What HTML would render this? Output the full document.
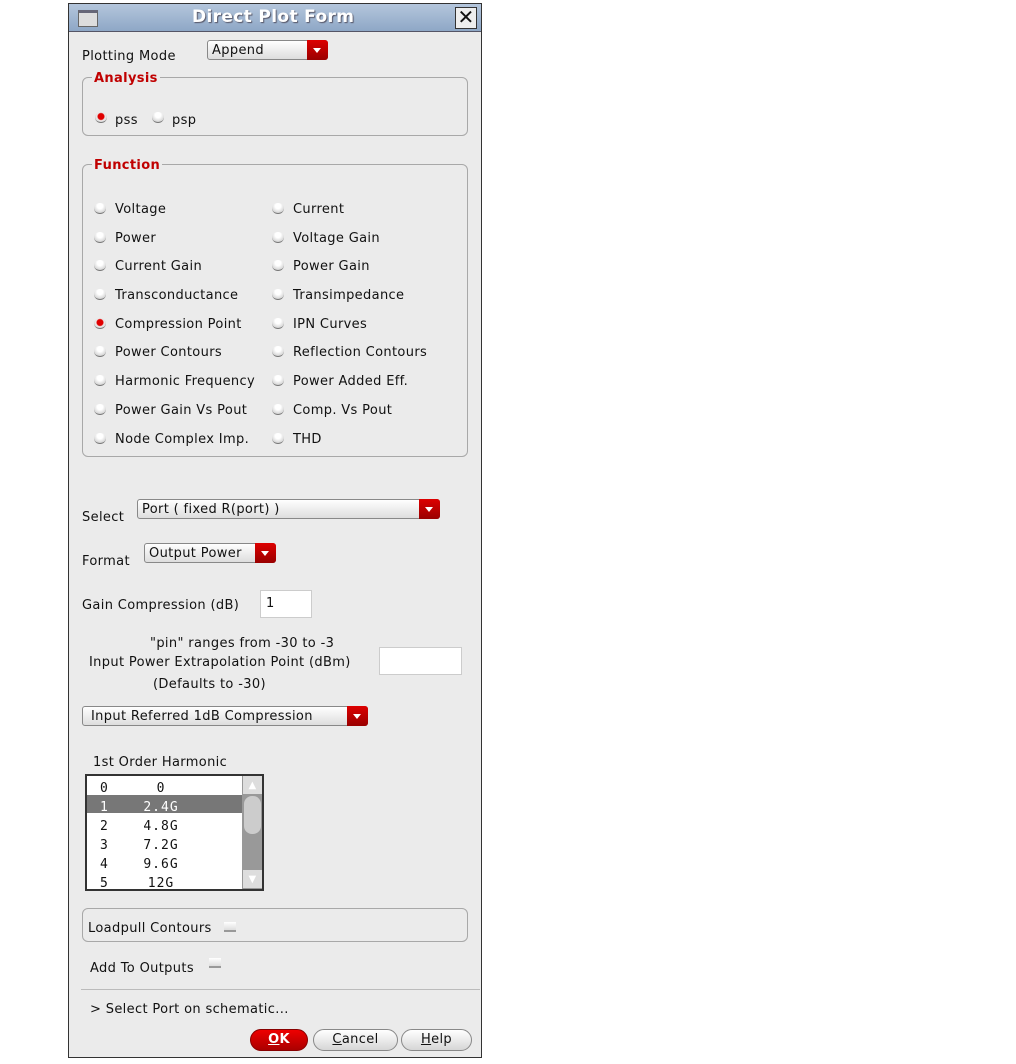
<!DOCTYPE html><html><head><style>
body{margin:0;width:1016px;height:1064px;background:#fff;position:relative;font-family:"DejaVu Sans","Liberation Sans",sans-serif;font-size:13px;line-height:19px;letter-spacing:0.35px;color:#111;overflow:hidden}
.a{position:absolute;white-space:nowrap}
#win{position:absolute;left:68px;top:3px;width:414px;height:1055px;border:1px solid #333;background:#ebebeb;box-sizing:border-box}
#title{position:absolute;left:69px;top:4px;width:412px;height:27px;background:linear-gradient(#b4c6dc,#8ea7c6);border-bottom:1px solid #556}
.grp{position:absolute;border:1px solid #a8a8a8;border-radius:6px}
.leg{position:absolute;background:#ebebeb;color:#c00000;font-weight:bold;padding:0 2px;line-height:15px}
.r{position:absolute;width:12px;height:11px;border-radius:50%;background:radial-gradient(circle at 50% 30%,#fff 30%,#bbb);border-bottom:1px solid #777;box-sizing:border-box}
.r.on{background:radial-gradient(circle at 50% 45%,#e00000 0 3px,#eee 4px,#bbb)}
.dd{position:absolute;height:20px;border:1px solid #888;border-radius:3px;background:linear-gradient(#fff,#ddd);box-sizing:border-box;padding:0 4px;line-height:19px}
.dd b{position:absolute;right:-1px;top:-1px;width:21px;height:20px;background:linear-gradient(#d00,#900);border-radius:0 3px 3px 0}
.dd b:after{content:"";position:absolute;left:6px;top:8px;border:4px solid transparent;border-top:5px solid #fff;border-bottom:0}
.in{position:absolute;background:#fff;border:1px solid #ccc;box-sizing:border-box}
.cb{position:absolute;width:12px;height:10px;border-bottom:2px solid #999;background:linear-gradient(#fff,#ddd);box-sizing:border-box}
.btn{position:absolute;height:22px;border:1px solid #888;border-radius:11px;background:linear-gradient(#fff,#d6d6d6);box-sizing:border-box;text-align:center;line-height:20px}
.mono{font-family:"DejaVu Sans Mono","Liberation Mono",monospace;font-size:13px;letter-spacing:1px}
</style></head><body>
<div id="win"></div>
<div id="title"></div>
<div class="a" style="left:78px;top:10px;width:18px;height:13px;background:#ddd;border:1px solid #666;border-top:3px solid #667"></div>
<div class="a" style="left:192px;top:6px;font-size:17px;font-weight:bold;color:#fff;text-shadow:1px 1px 1px #556;line-height:22px">Direct Plot Form</div>
<div class="a" style="left:455px;top:7px;width:20px;height:20px;border:1px solid #333;background:#eee;font-size:20px;line-height:19px;text-align:center">✕</div>

<div class="a" style="left:82px;top:47px">Plotting Mode</div>
<div class="dd" style="left:207px;top:40px;width:121px">Append<b></b></div>

<div class="grp" style="left:82px;top:77px;width:384px;height:57px"></div>
<div class="leg a" style="left:92px;top:71px">Analysis</div>
<div class="r on" style="left:95px;top:112px"></div><div class="a" style="left:115px;top:111px">pss</div>
<div class="r" style="left:152px;top:112px"></div><div class="a" style="left:172px;top:111px">psp</div>

<div class="grp" style="left:82px;top:164px;width:384px;height:291px"></div>
<div class="leg a" style="left:92px;top:158px">Function</div>
<div class="r" style="left:94px;top:203px"></div><div class="a" style="left:115px;top:200px">Voltage</div>
<div class="r" style="left:272px;top:203px"></div><div class="a" style="left:293px;top:200px">Current</div>
<div class="r" style="left:94px;top:232px"></div><div class="a" style="left:115px;top:229px">Power</div>
<div class="r" style="left:272px;top:232px"></div><div class="a" style="left:293px;top:229px">Voltage Gain</div>
<div class="r" style="left:94px;top:260px"></div><div class="a" style="left:115px;top:257px">Current Gain</div>
<div class="r" style="left:272px;top:260px"></div><div class="a" style="left:293px;top:257px">Power Gain</div>
<div class="r" style="left:94px;top:289px"></div><div class="a" style="left:115px;top:286px">Transconductance</div>
<div class="r" style="left:272px;top:289px"></div><div class="a" style="left:293px;top:286px">Transimpedance</div>
<div class="r on" style="left:94px;top:318px"></div><div class="a" style="left:115px;top:315px">Compression Point</div>
<div class="r" style="left:272px;top:318px"></div><div class="a" style="left:293px;top:315px">IPN Curves</div>
<div class="r" style="left:94px;top:346px"></div><div class="a" style="left:115px;top:343px">Power Contours</div>
<div class="r" style="left:272px;top:346px"></div><div class="a" style="left:293px;top:343px">Reflection Contours</div>
<div class="r" style="left:94px;top:375px"></div><div class="a" style="left:115px;top:372px">Harmonic Frequency</div>
<div class="r" style="left:272px;top:375px"></div><div class="a" style="left:293px;top:372px">Power Added Eff.</div>
<div class="r" style="left:94px;top:404px"></div><div class="a" style="left:115px;top:401px">Power Gain Vs Pout</div>
<div class="r" style="left:272px;top:404px"></div><div class="a" style="left:293px;top:401px">Comp. Vs Pout</div>
<div class="r" style="left:94px;top:433px"></div><div class="a" style="left:115px;top:430px">Node Complex Imp.</div>
<div class="r" style="left:272px;top:433px"></div><div class="a" style="left:293px;top:430px">THD</div>

<div class="a" style="left:82px;top:508px">Select</div>
<div class="dd" style="left:137px;top:499px;width:303px">Port ( fixed R(port) )<b></b></div>
<div class="a" style="left:82px;top:552px">Format</div>
<div class="dd" style="left:144px;top:543px;width:132px">Output Power<b></b></div>
<div class="a" style="left:82px;top:596px">Gain Compression (dB)</div>
<div class="in" style="left:260px;top:590px;width:52px;height:28px;padding:3px 5px">1</div>
<div class="a" style="left:150px;top:634px">"pin" ranges from -30 to -3</div>
<div class="a" style="left:89px;top:653px">Input Power Extrapolation Point (dBm)</div>
<div class="a" style="left:153px;top:675px">(Defaults to -30)</div>
<div class="in" style="left:379px;top:647px;width:83px;height:28px"></div>
<div class="dd" style="left:82px;top:706px;width:286px;padding-left:8px">Input Referred 1dB Compression<b></b></div>

<div class="a" style="left:93px;top:753px">1st Order Harmonic</div>
<div class="a" style="left:85px;top:774px;width:179px;height:117px;border:2px solid #333;background:#fff;box-sizing:border-box"></div>
<div class="a" style="left:87px;top:795px;width:155px;height:18px;background:#777"></div>
<div class="a" style="left:242px;top:776px;width:20px;height:113px;background:#999"></div>
<div class="a" style="left:244px;top:796px;width:17px;height:38px;background:#ccc;border-radius:8px"></div>
<div class="a" style="left:243px;top:776px;width:19px;height:18px;background:#ddd;color:#fff;font-size:10px;text-align:center">▲</div>
<div class="a" style="left:243px;top:870px;width:19px;height:18px;background:#ddd;color:#fff;font-size:10px;text-align:center">▼</div>
<div class="a mono" style="left:100px;top:779px;line-height:19px">0<br><span style="color:#fff">1</span><br>2<br>3<br>4<br>5</div>
<div class="a mono" style="left:130px;top:779px;line-height:19px;text-align:center;width:62px">0<br><span style="color:#fff">2.4G</span><br>4.8G<br>7.2G<br>9.6G<br>12G</div>

<div class="grp" style="left:82px;top:908px;width:384px;height:32px"></div>
<div class="a" style="left:88px;top:919px">Loadpull Contours</div>
<div class="cb" style="left:224px;top:922px"></div>
<div class="a" style="left:90px;top:959px">Add To Outputs</div>
<div class="cb" style="left:209px;top:958px"></div>
<div class="a" style="left:81px;top:989px;width:399px;height:1px;background:#bbb"></div>
<div class="a" style="left:90px;top:1000px">&gt; Select Port on schematic...</div>
<div class="btn" style="left:250px;top:1029px;width:58px;background:linear-gradient(#e00,#a00);border-color:#800;color:#fff;font-weight:bold"><u>O</u>K</div>
<div class="btn" style="left:313px;top:1029px;width:85px"><u>C</u>ancel</div>
<div class="btn" style="left:401px;top:1029px;width:71px"><u>H</u>elp</div>
</body></html>
